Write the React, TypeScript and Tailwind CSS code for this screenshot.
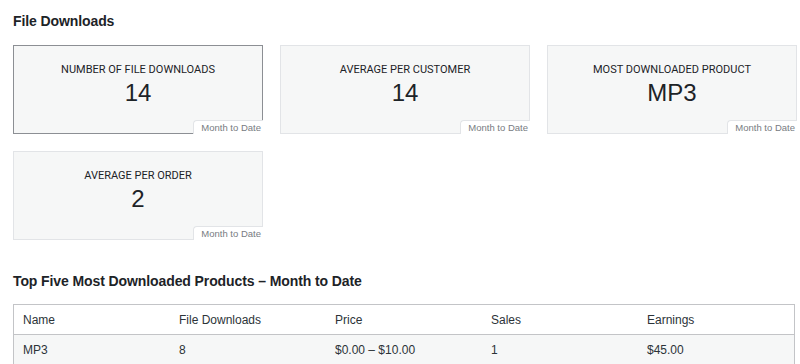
import React from "react";

const font = { fontFamily: '"Liberation Sans", Arial, sans-serif' };
const labelFont = { fontFamily: 'Roboto, "Liberation Sans", Arial, sans-serif' };

function Card({ label, value, active }: { label: string; value: string; active?: boolean }) {
  return (
    <div
      className={`relative w-[250px] h-[89px] bg-[#f6f7f7] border ${active ? "border-[#8c8f94]" : "border-[#e2e4e7]"} flex flex-col items-center pt-[17px]`}
    >
      <div className="text-[11px] leading-[14px] text-[#1d2327] uppercase" style={labelFont}>{label}</div>
      <div className="text-[24px] leading-[28px] mt-[2px] text-[#1d2327]">{value}</div>
      <div className="absolute right-[-1px] bottom-[-1px] bg-white border-l border-t border-[#e2e4e7] rounded-tl-[4px] pl-[7px] pr-[2px] h-[14px] text-[9.5px] leading-[14px] text-[#787c82]">
        Month to Date
      </div>
    </div>
  );
}

export default function App() {
  return (
    <div className="bg-white w-[800px] h-[364px] overflow-hidden pl-[13px] text-[#1d2327]" style={font}>
      <h2 className="pt-[12px] text-[14px] leading-[18px] font-bold tracking-[-0.1px]">File Downloads</h2>
      <div className="mt-[15px] grid grid-cols-[250px_250px_250px] gap-[17px]">
        <Card label="Number of File Downloads" value="14" active />
        <Card label="Average per Customer" value="14" />
        <Card label="Most Downloaded Product" value="MP3" />
        <Card label="Average per Order" value="2" />
      </div>
      <h2 className="mt-[32px] text-[14px] leading-[18px] font-bold tracking-[-0.1px]">
        Top Five Most Downloaded Products – Month to Date
      </h2>
      <div className="mt-[14px] w-[782px] border border-[#c3c4c7]">
        <div className="grid grid-cols-5 h-[30px] items-center text-[12px] text-[#2c3338] border-b border-[#c3c4c7] bg-white">
          <div className="pl-[9px]">Name</div>
          <div className="pl-[9px]">File Downloads</div>
          <div className="pl-[9px]">Price</div>
          <div className="pl-[9px]">Sales</div>
          <div className="pl-[9px]">Earnings</div>
        </div>
        <div className="grid grid-cols-5 h-[30px] items-center text-[12px] text-[#2c3338] bg-[#f6f7f7]">
          <div className="pl-[9px]">MP3</div>
          <div className="pl-[9px]">8</div>
          <div className="pl-[9px]">$0.00 – $10.00</div>
          <div className="pl-[9px]">1</div>
          <div className="pl-[9px]">$45.00</div>
        </div>
      </div>
    </div>
  );
}
